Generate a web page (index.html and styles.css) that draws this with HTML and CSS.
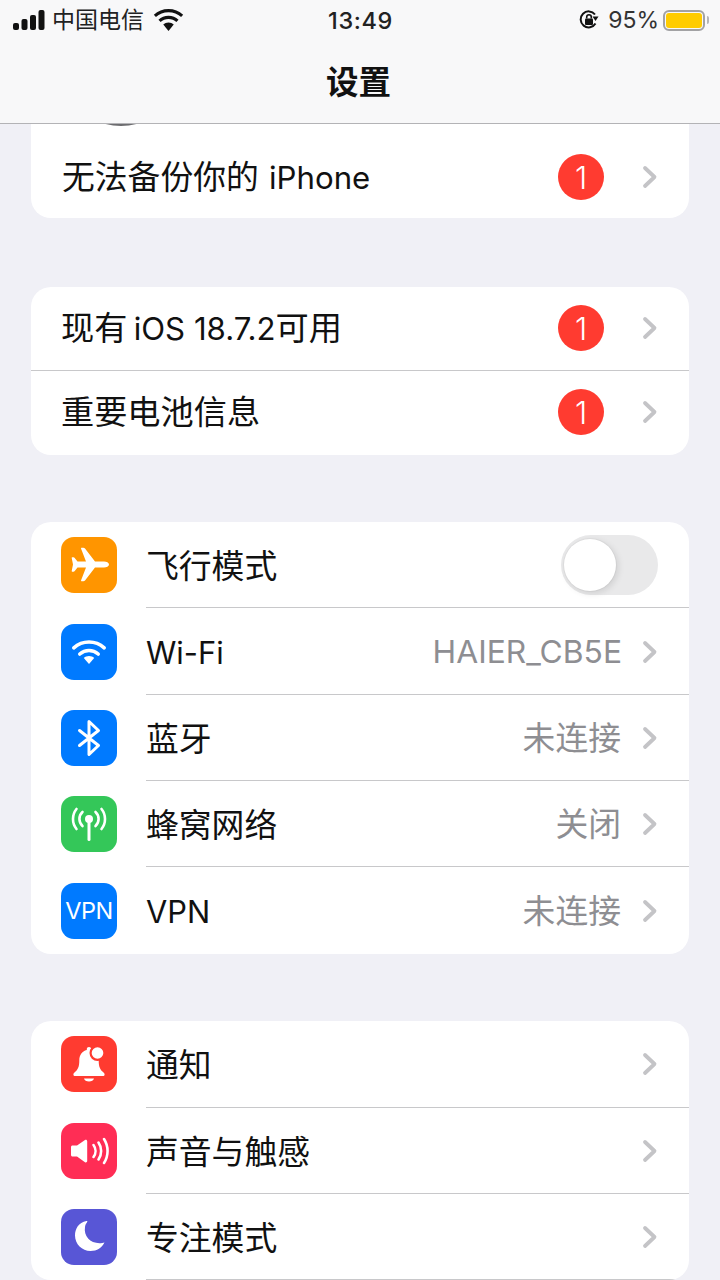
FILE: index.html
```html
<!DOCTYPE html>
<html lang="zh">
<head>
<meta charset="utf-8">
<title>设置</title>
<link rel="stylesheet" href="styles.css">
</head>
<body>
<div class="page">
  <header class="header">
    <div class="status">
      <div class="status-left">
        <svg class="signal" width="34" height="20" viewBox="0 0 34 20"><rect x="1" y="13" width="6" height="7" rx="2"/><rect x="9.500" y="9" width="6" height="11" rx="2"/><rect x="18" y="5" width="6" height="15" rx="2"/><rect x="26.500" y="0" width="6" height="20" rx="2"/></svg>
        <span class="carrier">中国电信</span>
        <svg class="status-wifi" width="32" height="22" viewBox="0 0 30 21"><path d="M15 3c4.600 0 8.800 1.700 12 4.700l2-2.200C25.200 1.900 20.300 0 15 0S4.800 1.900 1 5.500l2 2.200C6.200 4.700 10.400 3 15 3z"/><path d="M15 9.500c2.900 0 5.500 1 7.500 2.900l2.100-2.200C22 7.800 18.700 6.400 15 6.400S8 7.800 5.400 10.200l2.100 2.200c2-1.900 4.600-2.900 7.500-2.900z"/><path d="M15 13c-2 0-3.700.7-5 1.900L15 21l5-6.100C18.700 13.700 17 13 15 13z"/></svg>
      </div>
      <div class="clock">13:49</div>
      <div class="status-right">
        <svg class="lock" width="22" height="22" viewBox="0 0 22 22"><path class="lock-ring" d="M17.500 14.500A8 8 0 1 1 17 5.500"/><path class="lock-arrow" d="M14.500 7.500h6l-3 4.500z"/><rect class="lock-body" x="7" y="9.500" width="8" height="6.500" rx="1"/><path class="lock-ring thin" d="M8.700 9.500V8a2.300 2.300 0 0 1 4.600 0v1.500"/></svg>
        <span class="percent">95%</span>
        <div class="battery"><div class="battery-fill"></div></div>
        <div class="battery-cap"></div>
      </div>
    </div>
    <h1 class="title">设置</h1>
  </header>

  <main class="content">
    <section class="card card-first">
      <div class="profile-sliver"><div class="avatar-arc"></div></div>
      <div class="row row-short">
        <span class="label label-plain">无法备份你的 <span class="latin latin-gap">iPhone</span></span>
        <span class="badge">1</span>
        <svg class="chevron" width="16" height="24" viewBox="0 0 16 24"><path d="M3 3l9.500 9L3 21"/></svg>
      </div>
    </section>

    <section class="card card-second">
      <div class="row row-short">
        <span class="label label-plain">现有 <span class="latin latin-tight">iOS 18.7.2</span>可用</span>
        <span class="badge">1</span>
        <svg class="chevron" width="16" height="24" viewBox="0 0 16 24"><path d="M3 3l9.500 9L3 21"/></svg>
      </div>
      <div class="row row-short">
        <span class="label label-plain">重要电池信息</span>
        <span class="badge">1</span>
        <svg class="chevron" width="16" height="24" viewBox="0 0 16 24"><path d="M3 3l9.500 9L3 21"/></svg>
      </div>
    </section>

    <section class="card card-third">
      <div class="row">
        <div class="icon orange">
          <svg width="56" height="56" viewBox="0 0 56 56"><path class="fill" d="M48 27.500c0-1.800-2.500-3-5-3h-9L24 11.500c-.4-.5-1-.7-1.700-.7h-1.600c-.5 0-.8.4-.6 1L25 24.500h-8.500l-3-3.700c-.3-.3-.6-.5-1-.5h-1.200c-.4 0-.7.3-.6.8L12 27.500l-1.300 6.400c-.1.5.2.8.6.8h1.200c.4 0 .7-.2 1-.5l3-3.700H25l-4.900 12.700c-.2.6.1 1 .6 1h1.600c.7 0 1.300-.2 1.700-.7l10-13h9c2.500 0 5-1.200 5-3z"/></svg>
        </div>
        <span class="label">飞行模式</span>
        <div class="switch"><div class="knob"></div></div>
      </div>
      <div class="row">
        <div class="icon blue">
          <svg width="56" height="56" viewBox="0 0 56 56"><path class="stroke wide" d="M12.800 23.800A23 23 0 0 1 43.200 23.800"/><path class="stroke wide" d="M18.800 30A14 14 0 0 1 37.200 30"/><path class="fill" d="M28 32c-2 0-3.800.7-5.200 1.900L28 40l5.200-6.100C31.800 32.700 30 32 28 32z"/></svg>
        </div>
        <span class="label latin">Wi-Fi</span>
        <span class="value value-latin">HAIER_CB5E</span>
        <svg class="chevron" width="16" height="24" viewBox="0 0 16 24"><path d="M3 3l9.500 9L3 21"/></svg>
      </div>
      <div class="row">
        <div class="icon blue">
          <svg width="56" height="56" viewBox="0 0 56 56"><path class="stroke" d="M18.500 20.500L37.500 35.500 28 44.500V11.500L37.500 20.500 18.500 35.500"/></svg>
        </div>
        <span class="label">蓝牙</span>
        <span class="value">未连接</span>
        <svg class="chevron" width="16" height="24" viewBox="0 0 16 24"><path d="M3 3l9.500 9L3 21"/></svg>
      </div>
      <div class="row">
        <div class="icon green">
          <svg width="56" height="56" viewBox="0 0 56 56"><circle class="fill" cx="28" cy="23" r="4"/><rect class="fill" x="26.500" y="24" width="3" height="21" rx="1.500"/><path class="stroke thin" d="M21.500 30a9.500 9.500 0 0 1 0-14M34.500 16a9.500 9.500 0 0 1 0 14M15.500 33a16 16 0 0 1 0-20M40.500 13a16 16 0 0 1 0 20"/></svg>
        </div>
        <span class="label">蜂窝网络</span>
        <span class="value">关闭</span>
        <svg class="chevron" width="16" height="24" viewBox="0 0 16 24"><path d="M3 3l9.500 9L3 21"/></svg>
      </div>
      <div class="row">
        <div class="icon blue vpn">VPN</div>
        <span class="label latin">VPN</span>
        <span class="value">未连接</span>
        <svg class="chevron" width="16" height="24" viewBox="0 0 16 24"><path d="M3 3l9.500 9L3 21"/></svg>
      </div>
    </section>

    <section class="card card-fourth">
      <div class="row">
        <div class="icon red">
          <svg width="56" height="56" viewBox="0 0 56 56"><path class="fill" d="M28 11c-1.300 0-2.200.9-2.200 2.100v.8c-5 1.300-7.500 5.300-7.500 10.500 0 6.800-1.500 8.900-4.400 11.700-.9.900-1.500 1.500-1.500 2.300 0 1 .8 1.600 1.800 1.600h27.600c1 0 1.800-.6 1.800-1.600 0-.8-.6-1.400-1.500-2.300-2.900-2.800-4.400-4.900-4.400-11.700 0-5.200-2.500-9.200-7.500-10.500v-.8c0-1.200-.9-2.100-2.200-2.100z"/><path class="fill" d="M23 42.500h10c-.4 1.900-2.500 3-5 3s-4.600-1.100-5-3z"/><circle class="bell-gap" cx="36.500" cy="17" r="8"/><circle class="fill" cx="36.500" cy="17" r="5.800"/></svg>
        </div>
        <span class="label">通知</span>
        <span class="spacer"></span>
        <svg class="chevron" width="16" height="24" viewBox="0 0 16 24"><path d="M3 3l9.500 9L3 21"/></svg>
      </div>
      <div class="row">
        <div class="icon pink">
          <svg width="56" height="56" viewBox="0 0 56 56"><path class="fill" d="M10 24c0-.8.7-1.500 1.500-1.500H16l8-5.500c1-.7 2.200 0 2.200 1.200V38c0 1.200-1.200 1.900-2.200 1.200l-8-5.700h-4.500c-.8 0-1.500-.7-1.500-1.500z"/><path class="stroke thin" d="M32.500 22a10 10 0 0 1 0 12M37.500 19.500a15 15 0 0 1 0 17M43 16a22 22 0 0 1 0 24"/></svg>
        </div>
        <span class="label">声音与触感</span>
        <span class="spacer"></span>
        <svg class="chevron" width="16" height="24" viewBox="0 0 16 24"><path d="M3 3l9.500 9L3 21"/></svg>
      </div>
      <div class="row">
        <div class="icon indigo">
          <svg width="56" height="56" viewBox="0 0 56 56"><path class="fill" d="M25.500 12c-8 1.400-11.500 8-11.500 14.500C14 35 21 42 29.500 42c6.500 0 11.500-3.500 14-8.500-1.500.5-3 .7-5 .7C29 34.200 22.500 27 24 18c.3-2 1-3.500 2.200-5 .4-.5 0-1.100-.7-1z"/></svg>
        </div>
        <span class="label">专注模式</span>
        <span class="spacer"></span>
        <svg class="chevron" width="16" height="24" viewBox="0 0 16 24"><path d="M3 3l9.500 9L3 21"/></svg>
      </div>
    </section>
  </main>
</div>
</body>
</html>
```

FILE: styles.css
```css
* { box-sizing: border-box; }
html, body { margin: 0; padding: 0; }
body {
  width: 720px;
  height: 1280px;
  overflow: hidden;
  background: #f0f0f6;
  font-family: Inter, "Noto Sans CJK SC", "Liberation Sans", sans-serif;
  color: #111;
}
.page { height: 1280px; overflow: hidden; }

.header {
  height: 124px;
  background: #f8f8f9;
  border-bottom: 1px solid #b3b3b6;
  display: flex;
  flex-direction: column;
}
.status {
  height: 40px;
  padding: 0 11px 0 12px;
  display: grid;
  grid-template-columns: 1fr auto 1fr;
  align-items: center;
  color: #111;
}
.status-left { display: flex; align-items: center; gap: 6px; }
.signal { fill: #111; flex: none; }
.carrier { font-size: 23px; line-height: 26px; color: #222; }
.status-wifi { fill: #111; margin-left: 2px; width: 33px; }
.clock { font-size: 23.500px; font-weight: 500; letter-spacing: .6px; color: #222; }
.status-right { display: flex; align-items: center; justify-content: flex-end; }
.lock { margin-right: 8px; }
.lock-ring { fill: none; stroke: #111; stroke-width: 2; }
.lock-ring.thin { stroke-width: 1.600; }
.lock-arrow, .lock-body { fill: #111; }
.percent { font-size: 23px; color: #333; margin-right: 4px; }
.battery {
  width: 42px;
  height: 21px;
  border: 2px solid #a2a2a4;
  border-radius: 6px;
  padding: 1px;
}
.battery-fill { height: 100%; background: #ffcc00; border-radius: 3px; }
.battery-cap { width: 2px; height: 8px; margin-left: 2px; background: #b5b5b7; border-radius: 0 2px 2px 0; }

.title {
  margin: 17px 0 0;
  font-size: 32.500px;
  line-height: 46px;
  font-weight: 700;
  text-align: center;
  color: #111;
  font-family: "Noto Sans CJK SC", sans-serif;
  padding-right: 3px;
}

.content { padding: 0 31px; }
.card { background: #fff; border-radius: 20px; overflow: hidden; }
.card-first { border-radius: 0 0 20px 20px; }
.card-second { margin-top: 69px; }
.card-third { margin-top: 67px; }
.card-fourth { margin-top: 67.550px; }

.profile-sliver { height: 10px; position: relative; }
.avatar-arc {
  position: absolute;
  left: 30px;
  top: -118px;
  width: 120px;
  height: 120px;
  border-radius: 50%;
  background: #6d6d70;
}

.row {
  height: 86.330px;
  display: flex;
  align-items: center;
  padding-top: .650px;
  padding-left: 30px;
  padding-right: 31px;
  position: relative;
}
.card-fourth .row { padding-top: 0; }
.row-short { height: 84px; padding: 0 31px 2px 30px; }
.card-first .row-short { padding: 2px 31px 0 30px; }
.row::after {
  content: "";
  position: absolute;
  left: 115px;
  right: 0;
  bottom: 0;
  height: 1px;
  background: #c8c8ca;
}
.row-short::after { left: 0; }
.card-first .row-short::after {
  left: 176px;
  top: -1px;
  bottom: auto;
}
.card-second .row-short:last-child::after,
.row:last-child::after { display: none; }
.card-fourth .row:last-child::after { display: block; }

.label {
  font-size: 32.800px;
  line-height: 44px;
  font-weight: 400;
  color: #111;
  margin-left: 29px;
  white-space: nowrap;
  position: relative;
  top: 1px;
}
.label-plain { margin-left: 0; flex: 1; top: 0; }
.card-second .label-plain { font-size: 33.200px; }
.card-first .label-plain { padding-left: 1px; }
.latin { font-size: 31.200px; }
.latin-tight { margin-left: -3px; }
.latin-gap { margin-left: 1px; }
.label.latin { font-size: 30.800px; }
.spacer { flex: 1; }
.value {
  flex: 1;
  text-align: right;
  font-size: 32.800px;
  line-height: 44px;
  color: #8e8e92;
  white-space: nowrap;
  margin-right: 21px;
}
.value-latin { font-size: 31.800px; margin-right: 20px; }

.badge {
  width: 46px;
  height: 46px;
  border-radius: 50%;
  background: #ff3b30;
  color: #fff;
  display: flex;
  align-items: center;
  justify-content: center;
  font-size: 31px;
  font-weight: 300;
  margin-right: 38px;
}
.chevron { flex: none; }
.chevron path { fill: none; stroke: #c4c4c7; stroke-width: 3.800; stroke-linecap: round; stroke-linejoin: round; }

.icon {
  width: 56px;
  height: 56px;
  border-radius: 13px;
  flex: none;
  overflow: hidden;
}
.icon svg { display: block; }
.fill { fill: #fff; }
.bell-gap { fill: #ff3b30; }
.stroke { fill: none; stroke: #fff; stroke-width: 3; stroke-linecap: round; stroke-linejoin: round; }
.stroke.thin { stroke-width: 2.600; }
.stroke.wide { stroke-width: 3.600; }
.orange { background: #ff9500; }
.blue { background: #007aff; }
.green { background: #34c759; }
.red { background: #ff3b30; }
.pink { background: #ff2d55; }
.indigo { background: #5856d6; }
.vpn {
  color: #fff;
  font-size: 23.500px;
  line-height: 56px;
  text-align: center;
  letter-spacing: -.5px;
}

.switch {
  margin-left: auto;
  margin-top: -1px;
  width: 97px;
  height: 60px;
  border-radius: 30px;
  background: #e9e9ea;
  padding: 4px 3px;
}
.knob {
  width: 52px;
  height: 52px;
  border-radius: 50%;
  background: #fff;
  box-shadow: 0 0 0 1px rgba(0, 0, 0, .03), 2px 2px 7px rgba(0, 0, 0, .12);
}
```
